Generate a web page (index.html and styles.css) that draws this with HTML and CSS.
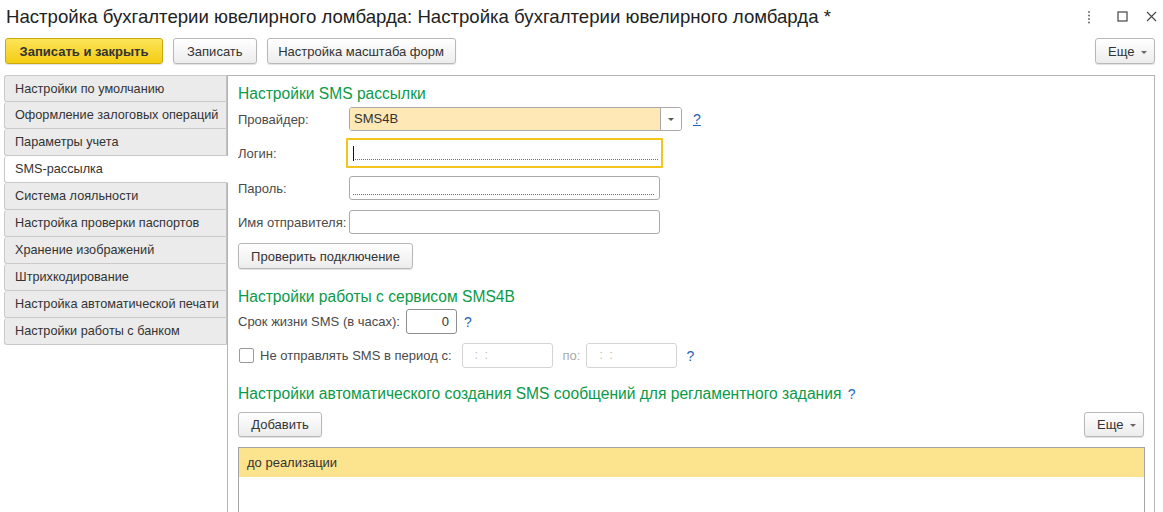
FILE: index.html
```html
<!DOCTYPE html>
<html lang="ru">
<head>
<meta charset="utf-8">
<title>Настройка бухгалтерии ювелирного ломбарда</title>
<link rel="stylesheet" href="styles.css">
</head>
<body>
<div class="window">
  <div class="titlebar">
    <div class="title">Настройка бухгалтерии ювелирного ломбарда: Настройка бухгалтерии ювелирного ломбарда *</div>
    <div class="wincontrols">
      <svg class="wc-more" width="4" height="14" viewBox="0 0 4 14"><circle cx="2" cy="2" r="1.1" fill="#777"/><circle cx="2" cy="5.5" r="1.1" fill="#777"/><circle cx="2" cy="9" r="1.1" fill="#777"/><circle cx="2" cy="12.5" r="1.1" fill="#777"/></svg>
      <svg class="wc-max" width="11" height="11" viewBox="0 0 11 11"><rect x="1" y="1" width="9" height="9" fill="none" stroke="#444" stroke-width="1.2"/></svg>
      <svg class="wc-close" width="11" height="11" viewBox="0 0 11 11"><path d="M1 1 L10 10 M10 1 L1 10" stroke="#444" stroke-width="1.1"/></svg>
    </div>
  </div>
  <div class="toolbar">
    <button class="btn btn-primary">Записать и закрыть</button>
    <button class="btn">Записать</button>
    <button class="btn btn-scale">Настройка масштаба форм</button>
    <div class="spacer"></div>
    <button class="btn btn-more">Еще <span class="caret"></span></button>
  </div>
  <div class="main">
    <div class="tabs">
      <div class="tab">Настройки по умолчанию</div>
      <div class="tab">Оформление залоговых операций</div>
      <div class="tab">Параметры учета</div>
      <div class="tab active">SMS-рассылка</div>
      <div class="tab">Система лояльности</div>
      <div class="tab">Настройка проверки паспортов</div>
      <div class="tab">Хранение изображений</div>
      <div class="tab">Штрихкодирование</div>
      <div class="tab">Настройка автоматической печати</div>
      <div class="tab">Настройки работы с банком</div>
    </div>
    <div class="panel">
      <div class="heading h1">Настройки SMS рассылки</div>
      <div class="row r-provider">
        <div class="label">Провайдер:</div>
        <div class="combo">
          <div class="combo-value">SMS4B</div>
          <div class="combo-btn"><span class="caret dark"></span></div>
        </div>
        <a class="help help-u">?</a>
      </div>
      <div class="row r-login">
        <div class="label">Логин:</div>
        <div class="field focused required"><span class="cursor"></span></div>
      </div>
      <div class="row r-pass">
        <div class="label">Пароль:</div>
        <div class="field required"></div>
      </div>
      <div class="row r-sender">
        <div class="label">Имя отправителя:</div>
        <div class="field"></div>
      </div>
      <div class="row r-check">
        <button class="btn btn-check">Проверить подключение</button>
      </div>
      <div class="heading h2">Настройки работы с сервисом SMS4B</div>
      <div class="row r-life">
        <div class="label-auto">Срок жизни SMS (в часах):</div>
        <div class="num">0</div>
        <a class="help">?</a>
      </div>
      <div class="row r-period">
        <span class="checkbox"></span>
        <div class="label-auto chk-label">Не отправлять SMS в период с:</div>
        <div class="time">:&nbsp;&nbsp;:</div>
        <div class="label-auto dim">по:</div>
        <div class="time">:&nbsp;&nbsp;:</div>
        <a class="help">?</a>
      </div>
      <div class="heading h3">Настройки автоматического создания SMS сообщений для регламентного задания <span class="help-inline">?</span></div>
      <div class="row r-add">
        <button class="btn btn-add">Добавить</button>
        <div class="spacer"></div>
        <button class="btn btn-more">Еще <span class="caret"></span></button>
      </div>
      <div class="table">
        <div class="trow selected">до реализации</div>
      </div>
    </div>
  </div>
</div>
</body>
</html>
```
FILE: styles.css
```css
* { box-sizing: border-box; }
html, body { margin: 0; padding: 0; background: #fff; }
body {
  font-family: "Liberation Sans", Arial, sans-serif;
  font-size: 13px;
  color: #333;
  width: 1163px;
  height: 512px;
  overflow: hidden;
}
.window { display: flex; flex-direction: column; height: 512px; }

.titlebar {
  display: flex;
  align-items: center;
  height: 33px;
  padding: 0 6px 0 6px;
}
.title {
  flex: 1;
  font-size: 18.6px;
  color: #222;
  white-space: nowrap;
}
.wincontrols { display: flex; align-items: center; }
.wc-more { margin-right: 26px; }
.wc-max { margin-right: 18px; }

.toolbar {
  display: flex;
  align-items: center;
  height: 26px;
  margin-top: 5px;
  padding: 0 8px 0 5px;
}
.spacer { flex: 1; }

.btn {
  font-family: "Liberation Sans", Arial, sans-serif;
  font-size: 13px;
  color: #333;
  height: 26px;
  padding: 0 13px;
  border: 1px solid #b8b8b8;
  border-radius: 3px;
  background: linear-gradient(#ffffff, #ececec);
  box-shadow: 0 1px 1px rgba(0,0,0,0.12);
  margin-right: 10px;
  white-space: nowrap;
  cursor: default;
}
.btn-primary {
  background: linear-gradient(#fde45a, #f3cc12);
  border-color: #c9a90c;
  font-weight: bold;
  color: #333;
  width: 158px;
  padding: 0;
}
.btn-scale { width: 189px; padding: 0; }
.btn-more { margin-right: 0; padding: 0 8px 0 12px; width: 60px; }
.caret {
  display: inline-block;
  width: 0; height: 0;
  border-left: 3px solid transparent;
  border-right: 3px solid transparent;
  border-top: 3px solid #666;
  vertical-align: middle;
  margin-left: 3px;
}
.caret.dark { border-top-color: #555; margin: 0; }

.main {
  flex: 1;
  display: flex;
  margin-top: 11px;
  padding-left: 4px;
  padding-right: 8px;
  min-height: 0;
}
.tabs {
  width: 223px;
  display: flex;
  flex-direction: column;
  position: relative;
  z-index: 1;
}
.tab {
  height: 27px;
  line-height: 26px;
  padding-left: 10px;
  font-size: 12.7px;
  background: #ebebeb;
  border: 1px solid #c9c9c9;
  border-top: none;
  border-right: 1px solid #c0c0c0;
  border-radius: 3px 0 0 3px;
  color: #333;
  white-space: nowrap;
}
.tab:first-child { border-top: 1px solid #c9c9c9; }
.tab.active {
  background: #fff;
  border-right-color: #fff;
  margin-right: -1px;
}

.panel {
  flex: 1;
  border: 1px solid #b4b4b4;
  border-bottom: none;
  padding: 8px 0 0 10px;
  min-width: 0;
}
.heading {
  font-size: 15.6px;
  line-height: 20px;
  height: 20px;
  color: #0b9a48;
  white-space: nowrap;
}
.help-inline { color: #2266b8; font-size: 14px; margin-left: 2px; }

.row { display: flex; align-items: center; height: 24px; }
.label { width: 111px; color: #4a4a4a; white-space: nowrap; }
.label-auto { color: #4a4a4a; white-space: nowrap; }

.r-provider { margin-top: 3px; }
.r-login { margin-top: 10px; }
.r-pass { margin-top: 11px; }
.r-sender { margin-top: 10px; }
.r-check { margin-top: 9px; height: 26px; }
.h2 { margin-top: 18px; }
.r-life { margin-top: 2px; height: 25px; }
.r-period { margin-top: 9px; height: 25px; }
.h3 { margin-top: 16px; }
.r-add { margin-top: 8px; height: 25px; padding-right: 10px; }

.combo {
  width: 333px;
  height: 24px;
  display: flex;
  border: 1px solid #a9a9a9;
  border-radius: 3px;
  overflow: hidden;
}
.combo-value {
  flex: 1;
  background: #fde8b6;
  padding-left: 4px;
  line-height: 22px;
  color: #333;
}
.combo-btn {
  width: 21px;
  border-left: 1px solid #a9a9a9;
  background: #fff;
  display: flex;
  align-items: center;
  justify-content: center;
}
.help {
  color: #1f63b5;
  font-size: 14px;
  margin-left: 11px;
  text-decoration: none;
}
.help-u { text-decoration: underline; }

.field {
  width: 311px;
  height: 24px;
  border: 1px solid #a9a9a9;
  border-radius: 3px;
  background: #fff;
  display: flex;
  align-items: center;
}
.field.required {
  background-image: repeating-linear-gradient(90deg, #e04040 0 1px, transparent 1px 2px);
  background-repeat: no-repeat;
  background-size: calc(100% - 8px) 1px;
  background-position: 3px calc(100% - 4px);
}
.field.focused {
  width: 317px;
  height: 30px;
  margin: -3px 0 -3px -3px;
  border: 2px solid #f4c51c;
  border-radius: 1px;
  background-position: 5px calc(100% - 6px);
}
.cursor {
  display: inline-block;
  width: 1px;
  height: 15px;
  background: #111;
  margin-left: 5px;
}

.btn-check { width: 175px; padding: 0; margin: 0; }

.num {
  width: 51px;
  height: 25px;
  margin-left: 6px;
  border: 1px solid #8e8e8e;
  border-radius: 3px;
  text-align: right;
  padding-right: 7px;
  line-height: 23px;
  color: #333;
}
.r-life .help { margin-left: 7px; }

.checkbox {
  width: 15px;
  height: 15px;
  border: 1px solid #9a9a9a;
  border-radius: 2px;
  margin-left: 1px;
  margin-right: 6px;
  background: #fff;
}
.chk-label { margin-right: 10px; }
.time {
  width: 91px;
  height: 25px;
  border: 1px solid #d4d4d4;
  border-radius: 3px;
  color: #bbb;
  padding-left: 12px;
  line-height: 23px;
  font-size: 12px;
}
.dim { color: #aaa; margin: 0 6px 0 10px; }
.r-period .help { margin-left: 9px; }

.btn-add { width: 84px; padding: 0; margin: 0; height: 25px; }
.r-add .btn-more { height: 25px; }

.table {
  margin-top: 10px;
  margin-right: 9px;
  height: 80px;
  border: 1px solid #a5a5a5;
  border-bottom: none;
}
.trow {
  height: 29px;
  line-height: 29px;
  padding-left: 8px;
  color: #333;
}
.trow.selected { background: #fce48f; }
```
